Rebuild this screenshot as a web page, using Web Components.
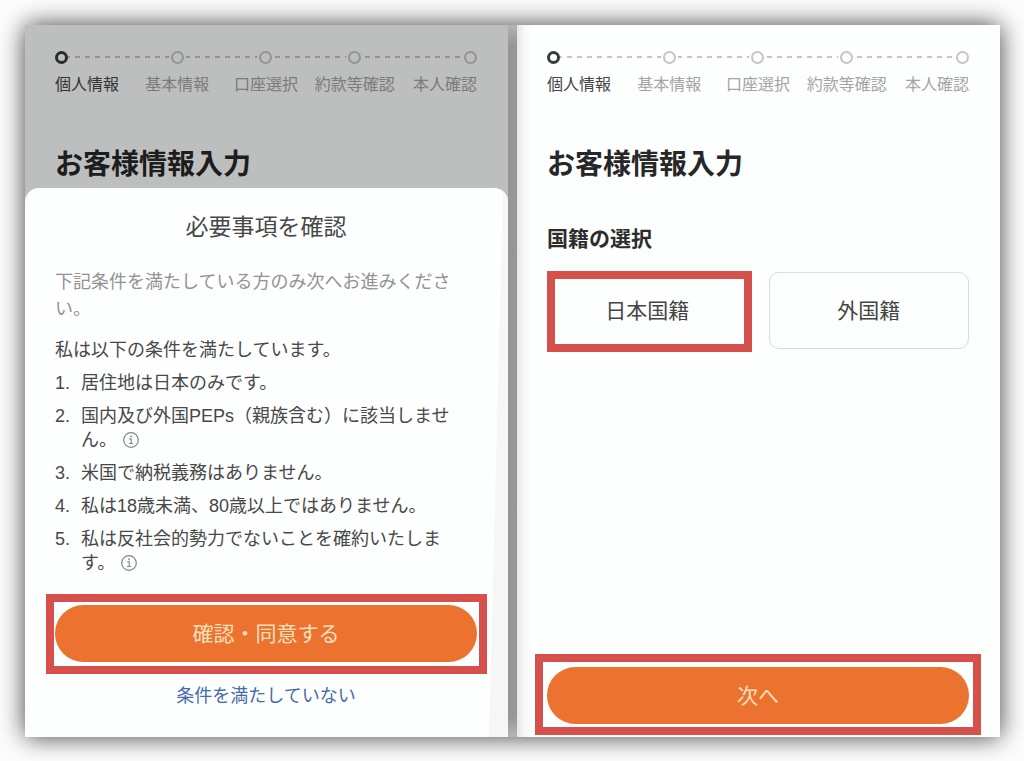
<!DOCTYPE html>
<html lang="ja">
<head>
<meta charset="utf-8">
<meta name="viewport" content="width=device-width, initial-scale=1">
<title>お客様情報入力</title>
<style>
  html { background: #fdfdfd; }
  body {
    margin: 0;
    font-family: "Liberation Sans", "Noto Sans CJK JP", sans-serif;
    color: #484848;
  }
</style>
</head>
<body>
<screen-pair>
  <phone-screen dimmed>
    <step-tracker></step-tracker>
    <page-title>お客様情報入力</page-title>
    <confirm-sheet slot="sheet"></confirm-sheet>
  </phone-screen>
  <phone-screen>
    <step-tracker></step-tracker>
    <page-title>お客様情報入力</page-title>
    <nationality-picker></nationality-picker>
    <focus-frame slot="footer" style="--frame-inset: -13px -12px -11px"><primary-button>次へ</primary-button></focus-frame>
  </phone-screen>
</screen-pair>

<script>
const define = (name, markup) => {
  const template = document.createElement('template');
  template.innerHTML = markup;
  customElements.define(name, class extends HTMLElement {
    constructor() {
      super();
      this.attachShadow({ mode: 'open' }).append(template.content.cloneNode(true));
    }
  });
};

define('screen-pair', `
  <style>
    :host { display: block; box-sizing: border-box; min-height: 100vh; padding: 25px 24px 24px 25px; }
    main {
      display: grid; grid-template-columns: 1fr 1fr; gap: 9px;
      min-height: calc(100vh - 49px);
      background: linear-gradient(#b4b4b4, #969696 20px calc(100% - 20px), #b4b4b4);
      box-shadow: 0 0 24px rgba(0, 0, 0, .75);
    }
  </style>
  <main><slot></slot></main>`);

define('phone-screen', `
  <style>
    :host { display: flex; flex-direction: column; position: relative; background: #fdfefe; }
    :host(:not([dimmed])) { background: linear-gradient(90deg, #e6e6e6, #f8f8f8 8px, #fdfefe 15px); }
    .content { padding: 26px 31px 3px 30px; }
    .footer { margin: auto 31px 13px 30px; }
    .backdrop { display: none; position: absolute; inset: 0; background: rgba(0, 0, 0, .25); }
    :host([dimmed]) .backdrop { display: block; }
    :host([dimmed]) .footer { display: none; }
    ::slotted([slot="sheet"]) { position: relative; flex: 1; }
  </style>
  <div class="content"><slot></slot></div>
  <div class="footer"><slot name="footer"></slot></div>
  <div class="backdrop"></div>
  <slot name="sheet"></slot>`);

define('step-tracker', `
  <style>
    :host { display: block; }
    ol {
      display: grid; grid-template-columns: 78fr 89fr 89fr 89fr 78fr;
      margin: 0; padding: 0; list-style: none;
      font-size: 16px; line-height: 24px; color: #a4a4a4;
      background: repeating-linear-gradient(90deg, #c9c2c2 0 5px, transparent 5px 10px) 0 5px / 100% 2px no-repeat;
    }
    li { display: flex; flex-direction: column; align-items: center; gap: 9px; white-space: nowrap; }
    li:first-child { align-items: flex-start; color: #444; }
    li:last-child { align-items: flex-end; }
    i {
      box-sizing: border-box; width: 13px; height: 13px; border-radius: 50%;
      border: 2px solid #c6c4c4; background: #fdfefe; box-shadow: 0 0 0 2px #fdfefe;
    }
    li:first-child i { border: 3px solid #3a3a3a; box-shadow: none; }
  </style>
  <ol>
    <li aria-current="step"><i></i><span>個人情報</span></li>
    <li><i></i><span>基本情報</span></li>
    <li><i></i><span>口座選択</span></li>
    <li><i></i><span>約款等確認</span></li>
    <li><i></i><span>本人確認</span></li>
  </ol>`);

define('page-title', `
  <style>
    :host { display: block; margin-top: 48px; }
    h1 { margin: 0; font-size: 28px; line-height: 40px; font-weight: 700; color: #272727; }
  </style>
  <h1><slot></slot></h1>`);

define('focus-frame', `
  <style>
    :host { display: block; position: relative; }
    :host::after {
      content: ""; position: absolute; inset: var(--frame-inset, 0);
      border: 8px solid #d7514c; pointer-events: none;
    }
  </style>
  <slot></slot>`);

define('primary-button', `
  <style>
    :host { display: block; }
    button {
      display: block; width: 100%; height: 57px; padding: 0 0 3px; border: 0; border-radius: 29px;
      background: #eb722f; color: #fbe0bd; font: inherit; font-size: 21px; cursor: pointer;
    }
  </style>
  <button type="button"><slot></slot></button>`);

define('info-button', `
  <style>
    :host { display: inline-block; margin-left: 6px; vertical-align: -2px; }
    button { display: block; padding: 0; border: 0; background: none; cursor: pointer; }
    svg { display: block; }
  </style>
  <button type="button" aria-label="詳細">
    <svg width="16" height="16" viewBox="0 0 16 16" fill="none" stroke="#858585">
      <circle cx="8" cy="8" r="7.3" stroke-width="1.2"/>
      <path d="M6.3 6.9H8.2V11.5M6 11.5H10.2" stroke-width="1.1"/>
      <circle cx="8" cy="4.4" r=".9" fill="#858585" stroke="none"/>
    </svg>
  </button>`);

define('confirm-sheet', `
  <style>
    :host {
      display: block; box-sizing: border-box; padding: 23px 31px 27px 30px; overflow: hidden;
      border-radius: 14px 14px 0 0; background: #fdfefe; font-size: 18px;
    }
    .edge {
      position: absolute; top: 0; right: 0; bottom: 0; width: 20px; background: #f6f6f6;
      clip-path: polygon(75% 0, 100% 0, 100% 100%, 5% 100%);
    }
    section { position: relative; }
    h2 { margin: 0 0 26px; font-size: 23px; line-height: 32px; font-weight: 400; text-align: center; }
    .lead, .claim, ol { padding-right: 15px; }
    .lead { margin: 0 0 15px; line-height: 27px; color: #929292; }
    .claim { margin: 0 0 9px; line-height: 24px; }
    ol {
      display: grid; gap: 9px; margin: 0 0 30px; padding-left: 0;
      list-style: none; line-height: 24px;
    }
    li { display: grid; grid-template-columns: 26px 1fr; }
    a {
      display: block; width: fit-content; margin: 20px auto 0; line-height: 28px;
      color: #456ba6; text-decoration: none;
    }
  </style>
  <div class="edge"></div>
  <section role="dialog" aria-labelledby="heading">
    <h2 id="heading">必要事項を確認</h2>
    <p class="lead">下記条件を満たしている方のみ次へお進みください。</p>
    <p class="claim">私は以下の条件を満たしています。</p>
    <ol>
      <li><span>1.</span><span>居住地は日本のみです。</span></li>
      <li><span>2.</span><span>国内及び外国PEPs（親族含む）に該当しません。<info-button></info-button></span></li>
      <li><span>3.</span><span>米国で納税義務はありません。</span></li>
      <li><span>4.</span><span>私は18歳未満、80歳以上ではありません。</span></li>
      <li><span>5.</span><span>私は反社会的勢力でないことを確約いたします。<info-button></info-button></span></li>
    </ol>
    <focus-frame style="--frame-inset: -11px -10px -12px -9px"><primary-button>確認・同意する</primary-button></focus-frame>
    <a href="#">条件を満たしていない</a>
  </section>`);

define('nationality-picker', `
  <style>
    :host { display: block; margin-top: 38px; }
    h2 { margin: 0 0 17px; font-size: 21px; line-height: 32px; font-weight: 700; color: #2c2c2c; }
    .options { display: grid; grid-template-columns: 1fr 1fr; gap: 21px; }
    button {
      display: block; width: 100%; height: 77px; padding: 0 0 3px; border: 1px solid #dcdada; border-radius: 10px;
      background: #fdfefe; color: #444; font: inherit; font-size: 21px; cursor: pointer;
    }
  </style>
  <h2 id="label">国籍の選択</h2>
  <div class="options" role="group" aria-labelledby="label">
    <focus-frame style="--frame-inset: -1px -4px -3px 0"><button type="button">日本国籍</button></focus-frame>
    <button type="button">外国籍</button>
  </div>`);
</script>
</body>
</html>
